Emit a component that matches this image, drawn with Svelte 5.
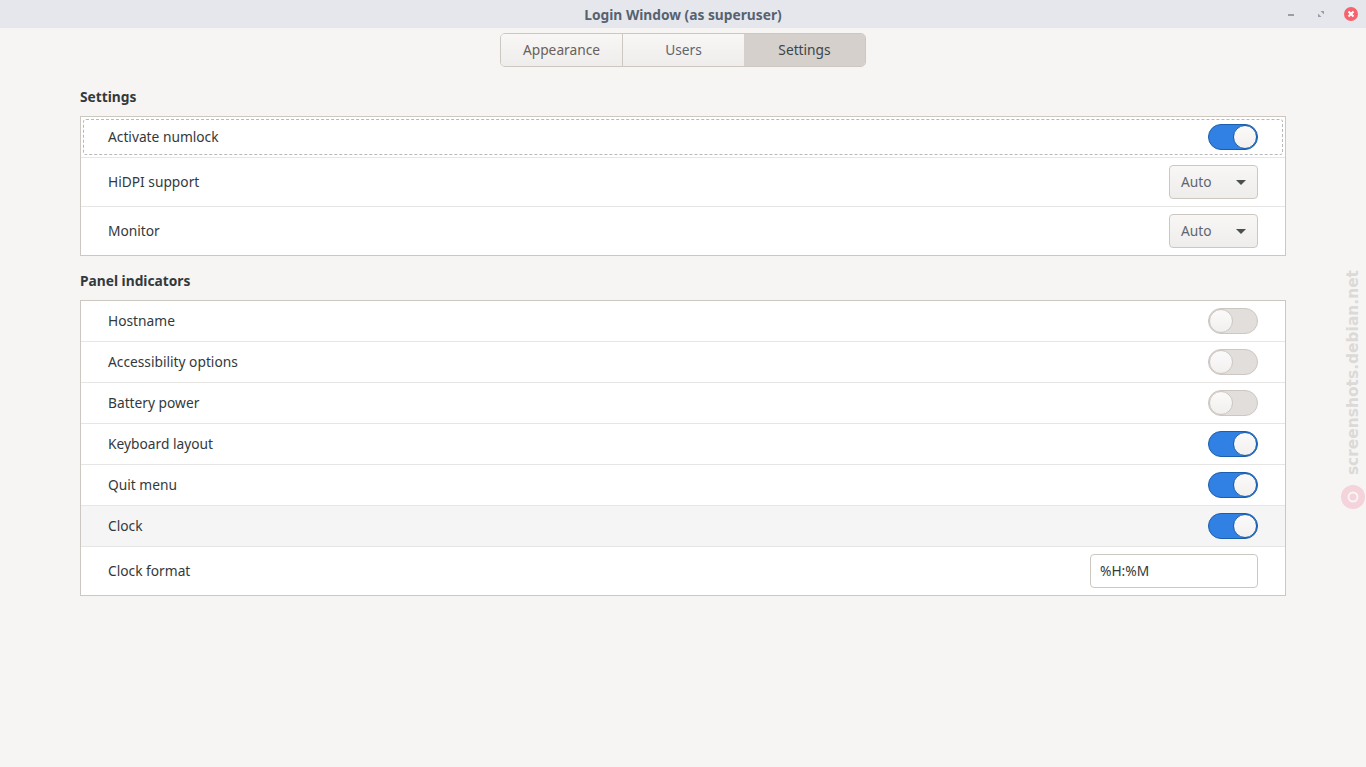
<script>
  const tabs = [
    { name: 'Appearance' },
    { name: 'Users' },
    { name: 'Settings', active: true }
  ]
  const indicators = [
    { label: 'Hostname', on: false },
    { label: 'Accessibility options', on: false },
    { label: 'Battery power', on: false },
    { label: 'Keyboard layout', on: true },
    { label: 'Quit menu', on: true },
    { label: 'Clock', on: true, hover: true }
  ]
</script>

{#snippet toggle(on)}
  <div class="switch" class:on><div class="knob"></div></div>
{/snippet}

{#snippet combo()}
  <div class="combo"><span>Auto</span><i class="arrow"></i></div>
{/snippet}

<div class="window">
  <header class="titlebar">
    <div class="title">Login Window (as superuser)</div>
    <div class="controls">
      <svg width="8" height="10" viewBox="0 0 8 10"><rect x="1" y="5" width="6" height="2" fill="#9a9ca6"/></svg>
      <svg width="8" height="10" viewBox="0 0 8 10"><path d="M3.5 2H7v3.5zM1 4.5L4.5 8H1z" fill="#9a9ca6"/></svg>
      <div class="close">
        <svg width="14" height="14" viewBox="0 0 14 14"><path d="M4.5 4.5l5 5M9.5 4.5l-5 5" stroke="#fff" stroke-width="2"/></svg>
      </div>
    </div>
  </header>

  <nav class="tabs">
    {#each tabs as tab}
      <div class="tab" class:active={tab.active}>{tab.name}</div>
    {/each}
  </nav>

  <main class="content">
    <h2>Settings</h2>
    <section class="list">
      <div class="row first">
        <span class="label">Activate numlock</span>
        {@render toggle(true)}
      </div>
      <div class="row tall">
        <span class="label">HiDPI support</span>
        {@render combo()}
      </div>
      <div class="row tall">
        <span class="label">Monitor</span>
        {@render combo()}
      </div>
    </section>

    <h2 class="second">Panel indicators</h2>
    <section class="list">
      {#each indicators as item}
        <div class="row" class:hover={item.hover}>
          <span class="label">{item.label}</span>
          {@render toggle(item.on)}
        </div>
      {/each}
      <div class="row tall">
        <span class="label">Clock format</span>
        <input class="entry" value="%H:%M" />
      </div>
    </section>
  </main>

  <div class="watermark">
    <span>screenshots.debian.net</span>
    <svg width="26" height="26" viewBox="0 0 26 26">
      <circle cx="13" cy="13" r="12" fill="#f4d3da"/>
      <circle cx="13" cy="13" r="4.5" fill="none" stroke="#f7f6f4" stroke-width="2"/>
    </svg>
  </div>
</div>

<style>
  :global(body) {
    margin: 0;
    background: #f6f5f4;
  }
  .window {
    position: relative;
    height: 767px;
    overflow: hidden;
    background: #f6f5f4;
    color: #2e3436;
    font-family: "Noto Sans", "Open Sans", sans-serif;
    font-size: 13.75px;
  }
  .titlebar {
    position: relative;
    height: 28px;
    background: #e6e7ec;
    display: flex;
    align-items: center;
    justify-content: center;
  }
  .title {
    font-weight: 700;
    color: #566270;
  }
  .controls {
    position: absolute;
    right: 8px;
    top: 7px;
    display: flex;
    align-items: center;
  }
  .controls > svg {
    margin-right: 22px;
  }
  .controls > svg:nth-child(2) {
    margin-right: 19px;
  }
  .close {
    width: 14px;
    height: 14px;
    border-radius: 50%;
    background: #f6636f;
  }
  .close svg {
    display: block;
  }
  .tabs {
    display: grid;
    grid-template-columns: 122px 121px 121px;
    width: 366px;
    height: 34px;
    box-sizing: border-box;
    margin: 5px auto 0;
    border: 1px solid #cdc7c2;
    border-radius: 5px;
    overflow: hidden;
  }
  .tab {
    display: flex;
    align-items: center;
    justify-content: center;
    padding-bottom: 2px;
    color: #5d6670;
    background: linear-gradient(#f8f7f6, #eeedeb);
  }
  .tab:first-child {
    color: #6a5f5a;
    border-right: 1px solid #cdc7c2;
  }
  .tab.active {
    background: #d5d0cc;
    color: #3d4448;
  }
  .content {
    padding: 0 80px;
  }
  h2 {
    margin: 20px 0 9px;
    height: 20px;
    line-height: 20px;
    font-size: inherit;
    font-weight: 700;
    color: #33393b;
  }
  h2.second {
    margin-top: 15px;
  }
  .list {
    background: #fff;
    border: 1px solid #cdc7c2;
  }
  .row {
    display: flex;
    align-items: center;
    justify-content: space-between;
    height: 40px;
    padding: 0 27px;
    border-bottom: 1px solid #e7e6e4;
    color: #33393b;
  }
  .row:last-child {
    border-bottom: none;
  }
  .label {
    padding-bottom: 2px;
  }
  .row.tall {
    height: 48px;
  }
  .row.hover {
    background: #f5f5f5;
  }
  .row.first {
    position: relative;
  }
  .row.first::after {
    content: '';
    position: absolute;
    inset: 2px 2px 2px 2px;
    border: 1px dashed #b8b8b8;
    border-radius: 3px;
    pointer-events: none;
  }
  .switch {
    width: 50px;
    height: 26px;
    box-sizing: border-box;
    border: 1px solid #cdc7c2;
    border-radius: 13px;
    background: #e1dedb;
    display: flex;
  }
  .switch.on {
    background: #3081e3;
    border-color: #1b5eab;
    justify-content: flex-end;
  }
  .knob {
    width: 24px;
    height: 24px;
    box-sizing: border-box;
    border-radius: 50%;
    background: linear-gradient(#fbfafa, #f2f0ef);
    border: 1px solid #cdc7c2;
  }
  .switch.on .knob {
    border-color: #1b5eab;
  }
  .combo {
    width: 89px;
    height: 34px;
    box-sizing: border-box;
    padding: 0 11px;
    display: flex;
    align-items: center;
    justify-content: space-between;
    border: 1px solid #cdc7c2;
    border-radius: 4px;
    background: linear-gradient(#f8f7f6, #eeedeb);
    color: #5d6670;
  }
  .combo span {
    padding-bottom: 2px;
  }
  .arrow {
    width: 0;
    height: 0;
    border-left: 5px solid transparent;
    border-right: 5px solid transparent;
    border-top: 5px solid #4a4f50;
  }
  .entry {
    width: 168px;
    height: 34px;
    box-sizing: border-box;
    padding: 0 9px 2px;
    border: 1px solid #cdc7c2;
    border-radius: 4px;
    background: #fff;
    font: inherit;
    color: #33393b;
    outline: none;
  }
  .watermark {
    position: absolute;
    right: 0;
    top: 270px;
    width: 26px;
    display: flex;
    flex-direction: column;
    align-items: center;
    gap: 9px;
    color: #dbdad8;
  }
  .watermark span {
    writing-mode: vertical-rl;
    transform: rotate(180deg);
    font-family: "DejaVu Sans", sans-serif;
    font-weight: 700;
    font-size: 15.45px;
    line-height: 26px;
  }
</style>
